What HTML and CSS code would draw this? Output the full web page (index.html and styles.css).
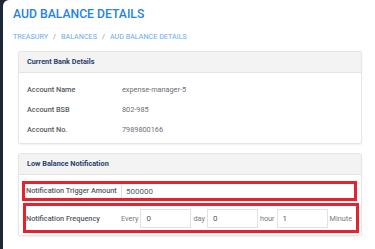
FILE: index.html
```html
<!DOCTYPE html>
<html lang="en">
<head>
  <meta charset="UTF-8" />
  <meta name="viewport" content="width=device-width, initial-scale=1.0" />
  <title>AUD Balance Details</title>
  <link rel="stylesheet" href="styles.css">
</head>

<body>
  <div class="shell">
    <div class="page">
      <h1 class="title">AUD BALANCE DETAILS</h1>

      <div class="crumbs">
        <span>TREASURY</span>
        <span class="sep">/</span>
        <span>BALANCES</span>
        <span class="sep">/</span>
        <span>AUD BALANCE DETAILS</span>
      </div>

      <div class="card">
        <div class="card-head">Current Bank Details</div>
        <div class="card-body details">
          <div class="row">
            <div class="label">Account Name</div>
            <div class="value">expense-manager-5</div>
          </div>
          <div class="row">
            <div class="label">Account BSB</div>
            <div class="value">802-985</div>
          </div>
          <div class="row">
            <div class="label">Account No.</div>
            <div class="value">7989800166</div>
          </div>
        </div>
      </div>

      <div class="card">
        <div class="card-head">Low Balance Notification</div>
        <div class="card-body notify">
          <div class="mark trigger">
            <div class="label cell">Notification Trigger Amount</div>
            <div class="amount">500000</div>
          </div>
          <div class="mark freq">
            <div class="label">Notification Frequency</div>
            <div class="freq-fields">
              <span class="unit">Every</span>
              <input class="box" type="text" value="0">
              <span class="unit">day</span>
              <input class="box" type="text" value="0">
              <span class="unit">hour</span>
              <input class="box" type="text" value="1">
              <span class="unit">Minute</span>
            </div>
          </div>
        </div>
      </div>
    </div>
  </div>
</body>
</html>
```

FILE: styles.css
```css
body {
  margin: 0;
  background: #1c2738;
  font-family: Roboto, 'Liberation Sans', sans-serif;
}

.shell {
  margin-left: 3px;
  height: 249px;
  background: #ffffff;
  border-top-left-radius: 6px;
  overflow: hidden;
}

.page {
  padding: 5px 0 0 10px;
}

.title {
  margin: 0;
  font-size: 12.2px;
  font-weight: 500;
  color: #2583e2;
  line-height: 18px;
}

.crumbs {
  margin-top: 9px;
  font-size: 7.2px;
  color: #6aaaf0;
  display: flex;
  gap: 5px;
  line-height: 10px;
}

.crumbs .sep {
  color: #8a8f98;
}

.card {
  margin: 9px 0 0 5px;
  width: 342px;
  border: 1px solid #e6e6e6;
  border-radius: 2px;
  box-shadow: 0 1px 2px rgba(0, 0, 0, 0.06);
}

.card-head {
  background: #f3f3f3;
  border-bottom: 1px solid #e3e3e3;
  height: 20px;
  line-height: 20px;
  padding-left: 8px;
  font-size: 7.3px;
  font-weight: 700;
  color: #2b3f6b;
}

.card-body {
  font-size: 7.3px;
}

.details {
  padding: 6px 0 4px 8px;
}

.row {
  display: flex;
  height: 20px;
  align-items: center;
}

.label {
  width: 95px;
  color: #555a62;
  font-weight: 500;
}

.value {
  color: #6b6f76;
}

.notify {
  padding: 6px 2px 2px 3px;
}

.mark {
  border: 3px solid #e5232e;
  display: flex;
  align-items: center;
}

.trigger {
  height: 14px;
  margin-right: 2px;
}

.trigger .cell {
  width: 95px;
  padding-left: 1px;
  height: 14px;
  line-height: 14px;
  border-right: 1px solid #e3e3e3;
}

.amount {
  padding-left: 4px;
  font-size: 8px;
  color: #555a62;
}

.freq {
  margin-top: 2px;
  margin-left: 1px;
  height: 24px;
}

.freq-fields {
  display: flex;
  align-items: center;
  gap: 2px;
  color: #777b82;
}

.box {
  width: 51px;
  height: 19px;
  box-sizing: border-box;
  border: 1px solid #e2e2e2;
  padding: 0 5px;
  font-family: Roboto, 'Liberation Sans', sans-serif;
  font-size: 8px;
  color: #555a62;
  outline: none;
}
```
